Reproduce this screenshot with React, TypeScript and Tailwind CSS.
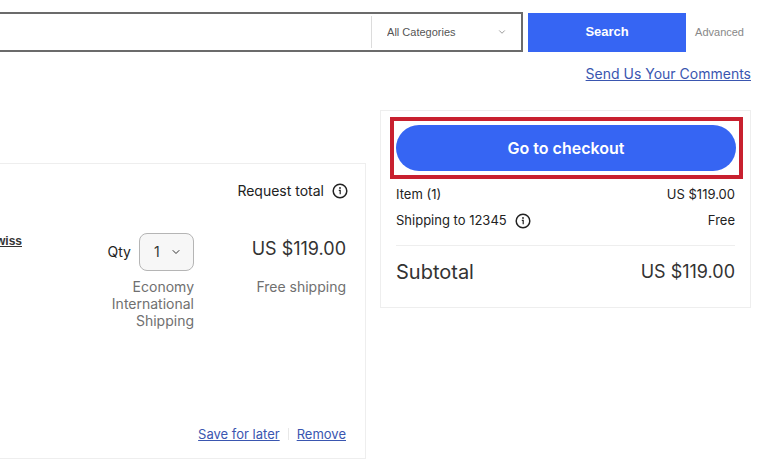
import { ChevronDown } from "lucide-react";

function InfoIcon() {
  return (
    <svg viewBox="0 0 16 16" className="w-4 h-4 shrink-0" fill="none" aria-hidden="true">
      <circle cx="8" cy="8" r="6.8" stroke="#222" strokeWidth="1.5" />
      <circle cx="8" cy="5" r="0.9" fill="#222" />
      <path d="M6.8 7.3H8.2V11.3" stroke="#222" strokeWidth="1.2" />
    </svg>
  );
}

function SearchBar() {
  return (
    <form
      onSubmit={(e) => e.preventDefault()}
      className="flex items-center pt-3 pr-6 font-['Liberation_Sans',Arial,sans-serif]"
    >
      <div className="flex-1 flex h-10 border-2 border-l-0 border-[#6b6b6b]">
        <input
          type="text"
          aria-label="Search for anything"
          className="flex-1 min-w-0 px-3 text-sm focus:outline-none"
        />
        <div className="relative w-[150px] my-0.5 border-l border-[#dcdcdc] flex items-center">
          <select
            aria-label="Category"
            className="appearance-none w-full h-full pl-[15px] bg-transparent text-[11px] text-[#555] focus:outline-none"
          >
            <option>All Categories</option>
          </select>
          <ChevronDown className="absolute right-3.5 w-2.5 h-2.5 text-[#888] pointer-events-none" />
        </div>
      </div>
      <button type="submit" className="w-[158px] h-[39px] ml-[5px] bg-[#3665f3] text-white text-[13px] font-bold">
        Search
      </button>
      <a href="#advanced" className="ml-[9px] text-[11px] text-[#888]">
        Advanced
      </a>
    </form>
  );
}

function CartItem() {
  return (
    <section className="flex-1 mt-[53px] h-[296px] border border-l-0 border-[#eee] pr-[19px] flex flex-col text-sm">
      <div className="flex items-center justify-end gap-2 mt-[17px] -mr-0.5 h-5 text-[#222]">
        Request total
        <InfoIcon />
      </div>

      <div className="flex justify-between mt-8">
        <div className="w-[22px] flex justify-end overflow-hidden h-5">
          <a
            href="#item"
            className="shrink-0 text-xs font-bold leading-4 text-[#333] underline font-['Liberation_Sans',Arial,sans-serif]"
          >
            wiss
          </a>
        </div>
        <div className="flex">
          <div className="flex flex-col items-end w-[100px]">
            <div className="flex items-center gap-2">
              <label htmlFor="qty" className="text-[#222]">
                Qty
              </label>
              <div className="relative flex items-center">
                <select
                  id="qty"
                  className="appearance-none w-[55px] h-[38px] pl-3.5 rounded-lg border border-[#b5b5b5] bg-[#f7f7f7] text-sm text-[#333]"
                >
                  <option>1</option>
                </select>
                <ChevronDown className="absolute right-3 w-3 h-3 text-[#333] pointer-events-none" />
              </div>
            </div>
            <p className="mt-[7px] leading-[17px] text-right text-[#707070]">
              Economy
              <br />
              International
              <br />
              Shipping
            </p>
          </div>
          <div className="flex flex-col items-end w-[152px] text-right">
            <p className="text-lg leading-8 text-[#333]">US $119.00</p>
            <p className="mt-[13px] leading-[17px] text-[#707070]">Free shipping</p>
          </div>
        </div>
      </div>

      <div className="flex justify-end items-center mt-auto mb-3.5 h-5 text-[13px] text-[#3a56b0]">
        <a href="#save" className="underline">
          Save for later
        </a>
        <span className="mx-2 h-3 w-px bg-[#e8e8e8]" />
        <a href="#remove" className="underline">
          Remove
        </a>
      </div>
    </section>
  );
}

function OrderSummary() {
  return (
    <aside className="w-[371px] h-[198px] border border-[#eee] text-[13px] text-[#222]">
      <div className="mt-1.5 ml-[9px] mr-[7px] border-4 border-[#c8202f] pl-0.5 pr-[3px] py-1">
        <button type="button" className="block w-full h-[46px] rounded-full bg-[#3665f3] text-white text-base font-semibold">
          Go to checkout
        </button>
      </div>
      <div className="px-[15px]">
        <div className="flex justify-between items-center mt-1.5 h-5">
          <span>Item (1)</span>
          <span>US $119.00</span>
        </div>
        <div className="flex justify-between items-center mt-1.5 h-5">
          <span className="flex items-center gap-2">
            Shipping to 12345
            <InfoIcon />
          </span>
          <span>Free</span>
        </div>
        <div className="flex justify-between items-center mt-3.5 pt-3 border-t border-[#eee] text-lg text-[#333]">
          <span className="text-xl">Subtotal</span>
          <span>US $119.00</span>
        </div>
      </div>
    </aside>
  );
}

export default function App() {
  return (
    <div className="min-h-screen bg-white overflow-hidden font-[Inter,sans-serif]">
      <SearchBar />
      <div className="flex justify-end mt-3 pr-[17px]">
        <a href="#comments" className="text-sm leading-5 text-[#3a56b0] underline">
          Send Us Your Comments
        </a>
      </div>
      <main className="flex items-start gap-3.5 mt-[26px] pr-[17px]">
        <CartItem />
        <OrderSummary />
      </main>
    </div>
  );
}
